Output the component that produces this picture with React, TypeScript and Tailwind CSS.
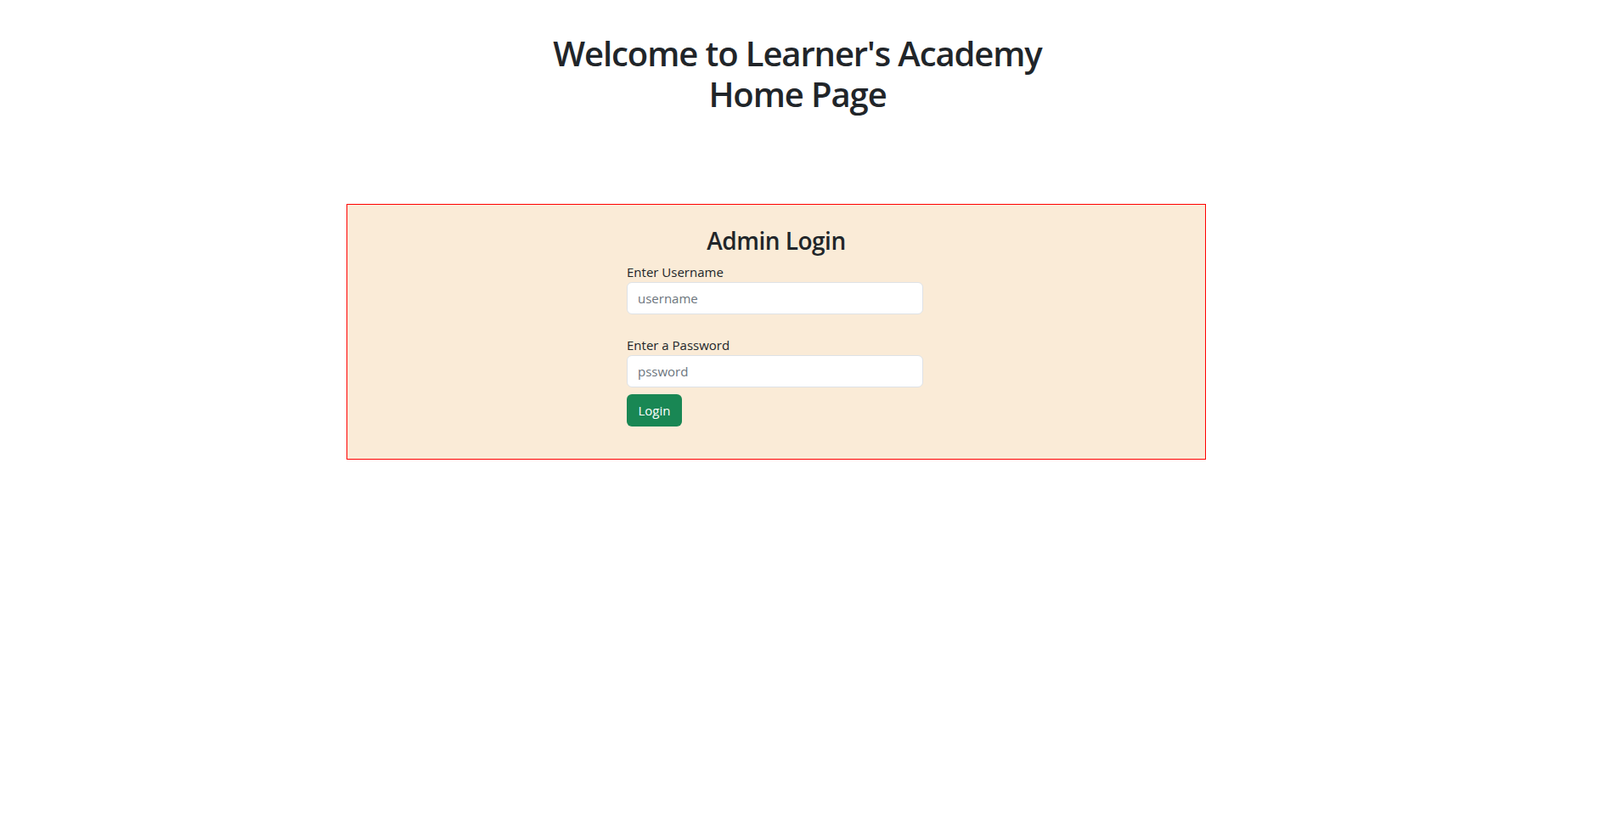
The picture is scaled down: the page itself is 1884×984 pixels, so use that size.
export default function App() {
  return (
    <div className="min-h-screen bg-white text-[#212529] font-['Open_Sans',sans-serif]">
      <h1 className="pt-[39px] pr-[6px] text-center text-[40px] leading-[48px] font-semibold tracking-[-1.1px]">
        Welcome to Learner's Academy
        <br />
        Home Page
      </h1>

      <div className="mt-[105px] ml-[408px] w-[1012px] border border-[#ff0000] bg-[#faebd7] pt-[25px] pb-[38px]">
        <h3 className="mb-2 text-center text-[28px] leading-[34px] font-semibold tracking-[-0.5px]">Admin Login</h3>
        <form className="ml-[329px] w-[349px]" onSubmit={(e) => e.preventDefault()}>
          <label className="block text-[15px] leading-6">Enter Username</label>
          <input
            type="text"
            placeholder="username"
            className="block h-[38px] w-full rounded-md border border-[#dee2e6] bg-white px-3 text-[15px] text-[#212529] placeholder:text-[#6c757d] outline-none"
          />
          <label className="mt-6 block text-[15px] leading-6">Enter a Password</label>
          <input
            type="password"
            placeholder="pssword"
            className="block h-[38px] w-full rounded-md border border-[#dee2e6] bg-white px-3 text-[15px] text-[#212529] placeholder:text-[#6c757d] outline-none"
          />
          <button
            type="submit"
            className="mt-2 h-[38px] w-[65px] rounded-md bg-[#198754] text-[15px] text-white"
          >
            Login
          </button>
        </form>
      </div>
    </div>
  );
}
